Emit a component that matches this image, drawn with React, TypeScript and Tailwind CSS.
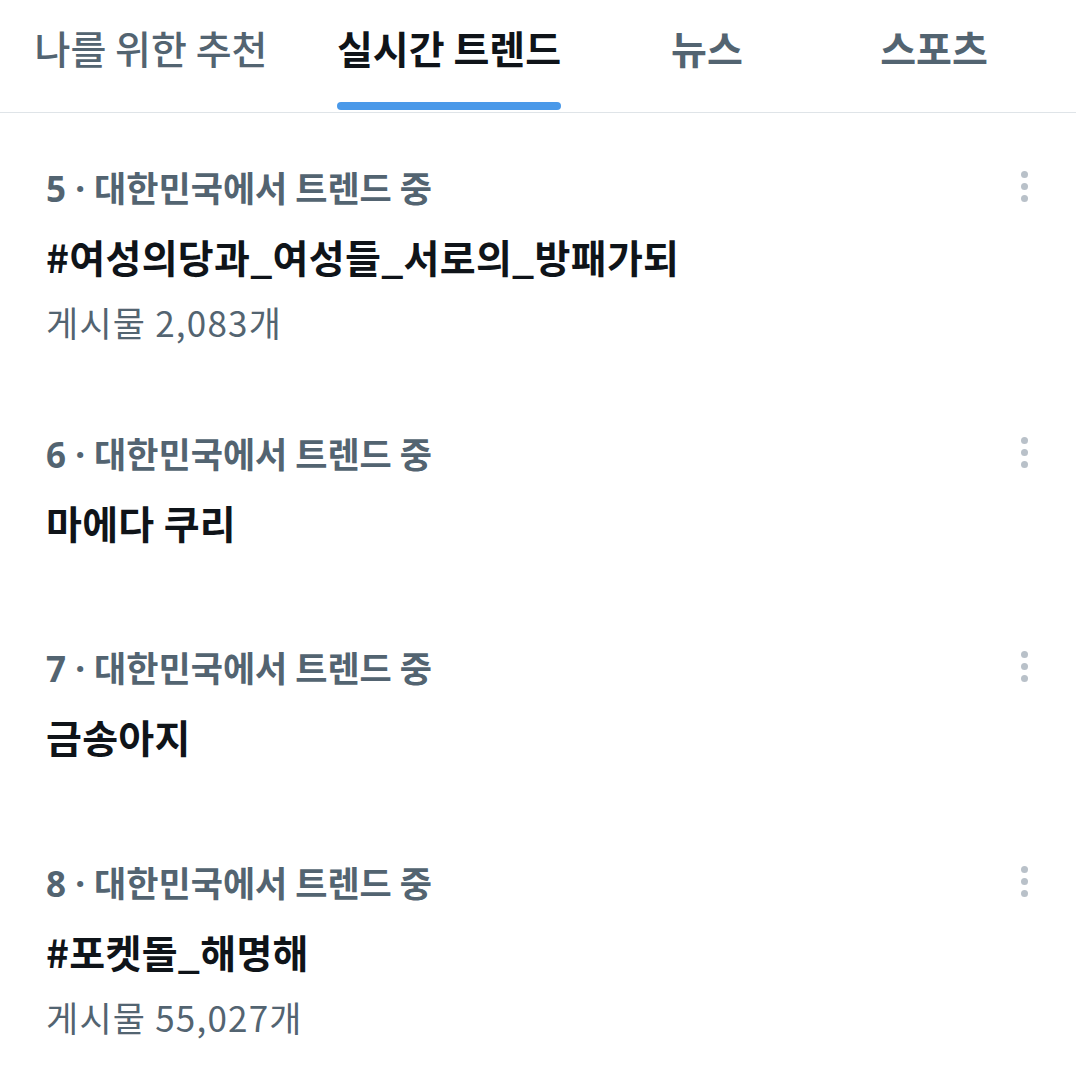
import React from "react";

const tabs = [
  { label: "나를 위한 추천", w: "w-[302px]", cls: "font-medium text-[#536471]", active: false },
  { label: "실시간 트렌드", w: "w-[294px]", cls: "font-bold text-[#0f1419]", active: true },
  { label: "뉴스", w: "w-[222px]", cls: "font-bold text-[#536471]", active: false },
  { label: "스포츠", w: "w-[232px]", cls: "font-bold text-[#536471]", active: false },
];

const items = [
  { rank: 5, title: "#여성의당과_여성들_서로의_방패가되", count: "게시물 2,083개", pb: "pb-[41px]" },
  { rank: 6, title: "마에다 쿠리", count: null, pb: "pb-[51px]" },
  { rank: 7, title: "금송아지", count: null, pb: "pb-[52px]" },
  { rank: 8, title: "#포켓돌_해명해", count: "게시물 55,027개", pb: "pb-[43px]" },
];

function Dots() {
  return (
    <div className="flex flex-col items-center gap-[5px] pt-[4px]">
      <span className="block w-[7px] h-[7px] rounded-full bg-[#b9c1c9]" />
      <span className="block w-[7px] h-[7px] rounded-full bg-[#b9c1c9]" />
      <span className="block w-[7px] h-[7px] rounded-full bg-[#b9c1c9]" />
    </div>
  );
}

export default function App() {
  return (
    <div
      className="w-[1076px] h-[1092px] bg-white overflow-hidden"
      style={{ fontFamily: '"Noto Sans CJK KR", "Noto Sans", sans-serif' }}
    >
      <div className="flex h-[113px] border-b border-[#dfe4e8]">
        {tabs.map((t) => (
          <div key={t.label} className={`${t.w} flex flex-col items-center`}>
            <div className={`${t.cls} text-[39px] leading-[48px] pt-[23px] whitespace-nowrap`}>
              {t.label}
            </div>
            <div className="flex-1" />
            {t.active ? (
              <div className="w-[224px] h-[8px] rounded-full bg-[#4a99e9] mb-[2px]" />
            ) : null}
          </div>
        ))}
      </div>
      <div className="mt-[4px]">
        {items.map((it) => (
          <div key={it.rank} className={`pt-[50px] ${it.pb} pl-[46px] pr-[48px] flex`}>
            <div className="flex-1 flex flex-col">
              <div className="h-[40px] leading-[40px] text-[35px] font-bold text-[#536471] whitespace-nowrap">
                <span style={{ fontFamily: '"Noto Sans", sans-serif' }}>{it.rank} · </span>
                대한민국에서 트렌드 중
              </div>
              <div className="mt-[25px] h-[48px] leading-[48px] text-[39px] font-bold text-[#0f1419] whitespace-nowrap tracking-[0.3px]">
                {it.title}
              </div>
              {it.count ? (
                <div className="mt-[22px] h-[40px] leading-[40px] text-[35px] text-[#536471] whitespace-nowrap tracking-[1.2px]">
                  {it.count}
                </div>
              ) : null}
            </div>
            <Dots />
          </div>
        ))}
      </div>
    </div>
  );
}
